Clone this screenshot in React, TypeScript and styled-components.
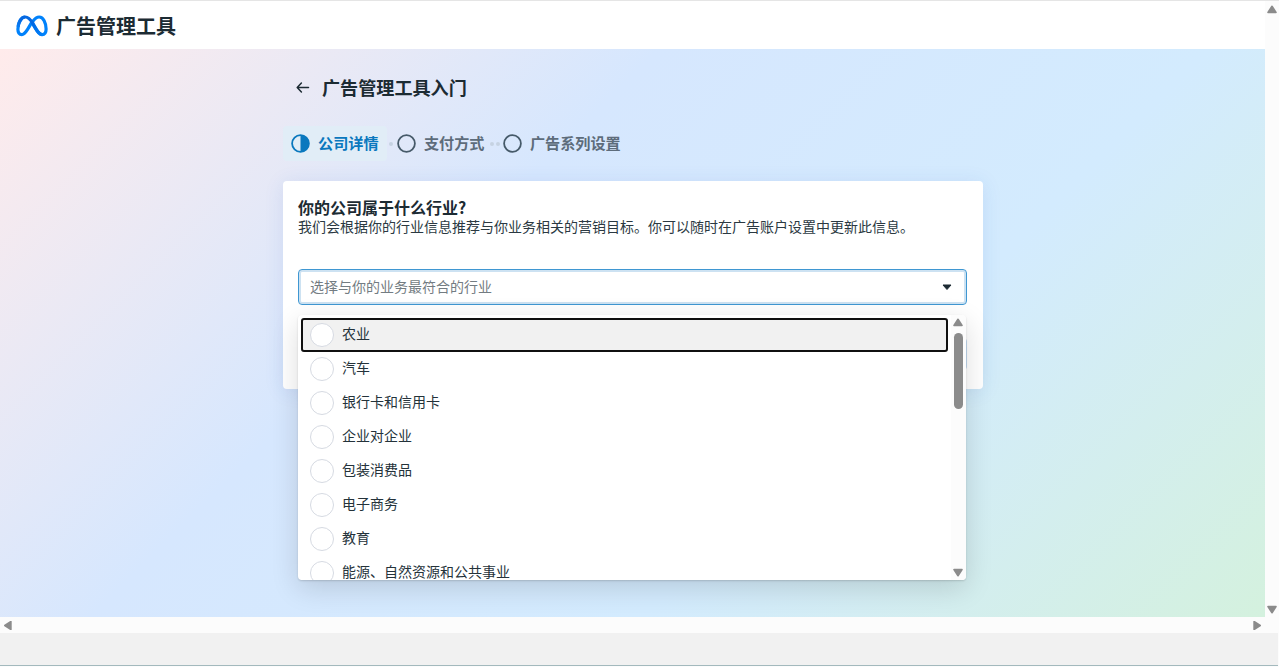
import React from "react";
import styled, { createGlobalStyle } from "styled-components";

const GlobalStyle = createGlobalStyle`
  * { box-sizing: border-box; }
  html, body { margin: 0; padding: 0; overflow: hidden; }
  body {
    font-family: "Noto Sans CJK SC", "Noto Sans", sans-serif;
    color: #1c2b33;
    font-size: 14px;
  }
  h1, h2, h3, p, ul { margin: 0; padding: 0; }
`;

const Shell = styled.div`
  width: 1279px;
  height: 667px;
  border-top: 1px solid #e5e5e5;
  display: flex;
  flex-direction: column;
  background: #fcfcfc;
`;

const Upper = styled.div`
  height: 616px;
  display: flex;
`;

const Viewport = styled.div`
  width: 1265px;
  display: flex;
  flex-direction: column;
`;

const Header = styled.header`
  height: 48px;
  flex: none;
  background: #fff;
  display: flex;
  align-items: center;
  padding: 1px 0 0 16px;
  gap: 8px;
`;

const Brand = styled.h1`
  font-size: 20px;
  line-height: 28px;
  font-weight: 700;
`;

const Stage = styled.main`
  flex: 1;
  padding-left: 283px;
  background: linear-gradient(135deg, #ffebeb 0%, #d6e7fe 36%, #d3ebfe 66%, #d4f1de 100%);
`;

const TitleRow = styled.div`
  display: flex;
  align-items: center;
  height: 28px;
  margin-top: 24px;
  padding-left: 12px;
  gap: 11px;
`;

const Title = styled.h2`
  font-size: 18.1px;
  line-height: 28px;
  font-weight: 700;
`;

const Steps = styled.div`
  display: flex;
  align-items: center;
  height: 35px;
  margin-top: 25px;
`;

const Step = styled.div<{ $active?: boolean }>`
  display: flex;
  align-items: center;
  height: 35px;
  gap: 8px;
  padding: 0 8px;
  border-radius: 4px;
  font-size: 15.15px;
  font-weight: 700;
  white-space: nowrap;
  color: ${(p) => (p.$active ? "#0a78be" : "#5d6c7b")};
  background: ${(p) => (p.$active ? "#e1edf7" : "transparent")};
`;

const StepLabel = styled.span`
  line-height: 20px;
  padding-bottom: 3px;
`;

const Dots = styled.div<{ $count: number }>`
  display: flex;
  flex: none;
  justify-content: ${(p) => (p.$count === 1 ? "flex-start" : "center")};
  gap: 2px;
  width: 2.4px;
  padding-left: 2px;
`;

const Dot = styled.i`
  flex: none;
  width: 4px;
  height: 4px;
  border-radius: 2px;
  background: #c6d2e2;
`;

const Card = styled.section`
  position: relative;
  width: 700px;
  height: 208px;
  margin-top: 20px;
  padding: 16px 16px 16px 15px;
  border-radius: 4px;
  background: #fff;
  box-shadow: 0 2px 20px rgba(40, 90, 190, 0.1);
`;

const Question = styled.h3`
  font-size: 16px;
  line-height: 20px;
  font-weight: 700;
`;

const Hint = styled.p`
  font-size: 14px;
  line-height: 18px;
  color: #2b3942;
`;

const Select = styled.div`
  display: flex;
  align-items: center;
  justify-content: space-between;
  width: 669px;
  height: 36px;
  margin-top: 34px;
  padding: 0 14px 0 11px;
  border: 1px solid #3f97d2;
  border-radius: 4px;
  box-shadow: inset 0 0 0 2px #cde2f2;
  background: #fff;
  color: #737c82;
`;

const Placeholder = styled.span`
  line-height: 20px;
  padding-bottom: 2px;
`;

const Actions = styled.div`
  display: flex;
  justify-content: flex-end;
  margin-top: 33px;
`;

const NextButton = styled.span`
  width: 90px;
  height: 32px;
  border-radius: 4px;
  background: #c4daf0;
`;

const Menu = styled.div`
  position: absolute;
  left: 15px;
  top: 134px;
  width: 668px;
  height: 265px;
  display: flex;
  overflow: hidden;
  border-radius: 4px;
  background: #fff;
  box-shadow: 0 1px 2px rgba(0, 0, 0, 0.15), 0 8px 28px rgba(0, 0, 0, 0.14);
`;

const Options = styled.ul`
  list-style: none;
  width: 652.5px;
  padding: 2.6px 3px 0;
`;

const Option = styled.li<{ $focused?: boolean }>`
  display: flex;
  align-items: center;
  height: 34px;
  gap: 8px;
  padding-left: ${(p) => (p.$focused ? "7px" : "9px")};
  border: ${(p) => (p.$focused ? "2px solid #101010" : "none")};
  border-radius: 3px;
  background: ${(p) => (p.$focused ? "#f1f1f1" : "#fff")};
  color: #24323a;
`;

const OptionLabel = styled.span`
  line-height: 20px;
  padding-bottom: 4px;
`;

const Radio = styled.span`
  flex: none;
  width: 24px;
  height: 24px;
  border: 1px solid #d6dae2;
  border-radius: 50%;
  background: #fff;
`;

const MenuBar = styled.div`
  width: 15px;
  display: flex;
  flex-direction: column;
  align-items: center;
  padding: 3px 0 3px;
  background: #fcfcfc;
`;

const Thumb = styled.div`
  width: 9px;
  height: 76px;
  margin: 6px 0 auto;
  border-radius: 5px;
  background: #8b8b8b;
`;

const VerticalBar = styled.div`
  width: 14px;
  display: flex;
  flex-direction: column;
  justify-content: space-between;
  align-items: center;
  padding: 4px 0 3px;
`;

const HorizontalBar = styled.div`
  height: 16px;
  width: 1265px;
  display: flex;
  justify-content: space-between;
  align-items: center;
  padding: 0 3px 0 3px;
`;

const Footer = styled.div`
  height: 33px;
  width: 1278px;
  background: #f1f1f1;
  border-bottom: 1px solid #a3b9bd;
`;

const turns = { up: 0, right: 90, down: 180, left: 270 };

const Arrow = ({ dir }: { dir: keyof typeof turns }) => (
  <svg width="10" height="9" viewBox="0 0 10 9">
    <path
      d="M5 1.3 9 7.4H1Z"
      fill="#8b8b8b"
      stroke="#8b8b8b"
      strokeWidth="1.6"
      strokeLinejoin="round"
      transform={`rotate(${turns[dir]} 5 4.5)`}
    />
  </svg>
);

const MetaLogo = () => (
  <svg width="32" height="22" viewBox="0 0 32 22" fill="none">
    <defs>
      <linearGradient id="loopLeft" x1="2" y1="18" x2="16" y2="4" gradientUnits="userSpaceOnUse">
        <stop offset="0" stopColor="#0a86fb" />
        <stop offset="0.6" stopColor="#0668e1" />
        <stop offset="1" stopColor="#0668e1" />
      </linearGradient>
      <linearGradient id="loopRight" x1="14" y1="8" x2="29" y2="18" gradientUnits="userSpaceOnUse">
        <stop offset="0" stopColor="#0064e0" />
        <stop offset="1" stopColor="#0082fb" />
      </linearGradient>
    </defs>
    <path
      d="M16.6 6.6C18.8 3.5 20.8 2 23.2 2 27.2 2 30.1 7.7 30.1 14.1c0 3.5-1.4 5.5-4 5.5-2.7 0-4.4-2.1-7.4-7.3L16.4 8.3"
      stroke="#0082fb"
      strokeWidth="3.2"
    />
    <path
      d="M16.3 6.4C13.8 10.7 12.8 12.5 11.4 14.7 9.2 18.2 7.9 19.6 5.8 19.6c-2.5 0-3.9-2-3.9-5.3C1.9 7.5 5.2 2 9 2"
      stroke="#0082fb"
      strokeWidth="3.2"
    />
    <path d="M2.1 11.7C2.9 6.2 5.8 2 9.2 2c2.9 0 5.2 2.3 7.8 6.6" stroke="url(#loopLeft)" strokeWidth="3.2" />
    <path d="M16.2 7.3l2.5 4.3c3 5.4 4.7 8 7.4 8" stroke="url(#loopRight)" strokeWidth="3.2" />
  </svg>
);

const BackIcon = () => (
  <svg width="16" height="16" viewBox="0 0 16 16" fill="none" stroke="#1c2b33" strokeWidth="1.5" strokeLinecap="round" strokeLinejoin="round">
    <path d="M13.5 8.5H2.3M6.4 4.1 2.2 8.5l4.2 4.4" />
  </svg>
);

const StepIcon = ({ half }: { half?: boolean }) => (
  <svg width="19" height="19" viewBox="0 0 19 19" fill="none">
    <circle cx="9.5" cy="9.5" r="8.4" stroke={half ? "#0a78be" : "#465a69"} strokeWidth="1.8" />
    {half && <path d="M9.5 1a8.5 8.5 0 0 1 0 17Z" fill="#0a78be" />}
  </svg>
);

const Caret = () => (
  <svg width="10" height="8" viewBox="0 0 10 8">
    <path d="M1 2h8L5 6.5Z" fill="#1c2b33" stroke="#1c2b33" strokeLinejoin="round" />
  </svg>
);

const industries = [
  "农业",
  "汽车",
  "银行卡和信用卡",
  "企业对企业",
  "包装消费品",
  "电子商务",
  "教育",
  "能源、自然资源和公共事业",
];

export default function App() {
  return (
    <Shell>
      <GlobalStyle />
      <Upper>
        <Viewport>
          <Header>
            <MetaLogo />
            <Brand>广告管理工具</Brand>
          </Header>
          <Stage>
            <TitleRow>
              <BackIcon />
              <Title>广告管理工具入门</Title>
            </TitleRow>
            <Steps>
              <Step $active>
                <StepIcon half />
                <StepLabel>公司详情</StepLabel>
              </Step>
              <Dots $count={1}>
                <Dot />
              </Dots>
              <Step>
                <StepIcon />
                <StepLabel>支付方式</StepLabel>
              </Step>
              <Dots $count={2}>
                <Dot />
                <Dot />
              </Dots>
              <Step>
                <StepIcon />
                <StepLabel>广告系列设置</StepLabel>
              </Step>
            </Steps>
            <Card>
              <Question>你的公司属于什么行业?</Question>
              <Hint>我们会根据你的行业信息推荐与你业务相关的营销目标。你可以随时在广告账户设置中更新此信息。</Hint>
              <Select>
                <Placeholder>选择与你的业务最符合的行业</Placeholder>
                <Caret />
              </Select>
              <Actions>
                <NextButton />
              </Actions>
              <Menu>
                <Options>
                  {industries.map((name, i) => (
                    <Option key={name} $focused={i === 0}>
                      <Radio />
                      <OptionLabel>{name}</OptionLabel>
                    </Option>
                  ))}
                </Options>
                <MenuBar>
                  <Arrow dir="up" />
                  <Thumb />
                  <Arrow dir="down" />
                </MenuBar>
              </Menu>
            </Card>
          </Stage>
        </Viewport>
        <VerticalBar>
          <Arrow dir="up" />
          <Arrow dir="down" />
        </VerticalBar>
      </Upper>
      <HorizontalBar>
        <Arrow dir="left" />
        <Arrow dir="right" />
      </HorizontalBar>
      <Footer />
    </Shell>
  );
}
